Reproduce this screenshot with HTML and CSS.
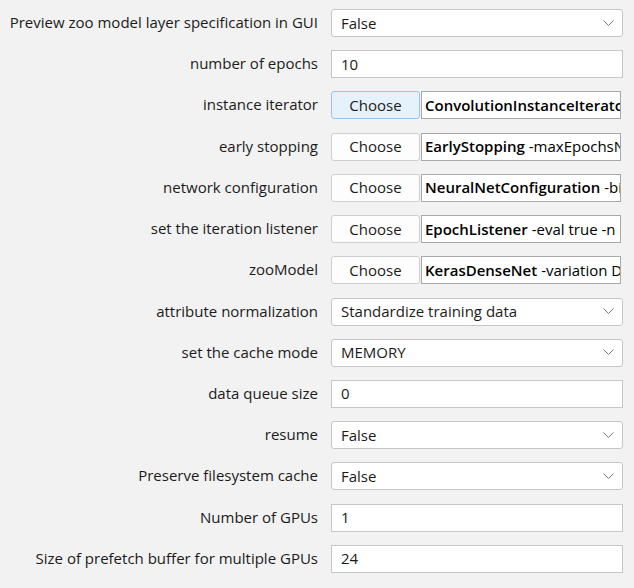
FILE: index.html
```html
<!DOCTYPE html>
<html>
<head>
<meta charset="utf-8">
<link rel="stylesheet" href="styles.css">
</head>
<body>
<div class="form">
  <div class="label">Preview zoo model layer specification in GUI</div>
  <div class="combo"><span>False</span><svg class="chev" width="11" height="6" viewBox="0 0 11 6"><path d="M0.5 0.5 L5.5 5.5 L10.5 0.5" /></svg></div>

  <div class="label">number of epochs</div>
  <div class="field">10</div>

  <div class="label">instance iterator</div>
  <div class="chooser"><div class="btn active">Choose</div><div class="value"><b>ConvolutionInstanceIterator</b> -textsFile train.csv -imagesLocation images</div></div>

  <div class="label">early stopping</div>
  <div class="chooser"><div class="btn">Choose</div><div class="value"><b>EarlyStopping</b> -maxEpochsNoImprovement 0 -valPercentage 0.0</div></div>

  <div class="label">network configuration</div>
  <div class="chooser"><div class="btn">Choose</div><div class="value"><b>NeuralNetConfiguration</b> -biasInit 0.0 -biasUpdater Sgd</div></div>

  <div class="label">set the iteration listener</div>
  <div class="chooser"><div class="btn">Choose</div><div class="value"><b>EpochListener</b> -eval true -n 5</div></div>

  <div class="label">zooModel</div>
  <div class="chooser"><div class="btn">Choose</div><div class="value"><b>KerasDenseNet</b> -variation DENSENET121</div></div>

  <div class="label">attribute normalization</div>
  <div class="combo"><span>Standardize training data</span><svg class="chev" width="11" height="6" viewBox="0 0 11 6"><path d="M0.5 0.5 L5.5 5.5 L10.5 0.5" /></svg></div>

  <div class="label">set the cache mode</div>
  <div class="combo"><span>MEMORY</span><svg class="chev" width="11" height="6" viewBox="0 0 11 6"><path d="M0.5 0.5 L5.5 5.5 L10.5 0.5" /></svg></div>

  <div class="label">data queue size</div>
  <div class="field">0</div>

  <div class="label">resume</div>
  <div class="combo"><span>False</span><svg class="chev" width="11" height="6" viewBox="0 0 11 6"><path d="M0.5 0.5 L5.5 5.5 L10.5 0.5" /></svg></div>

  <div class="label">Preserve filesystem cache</div>
  <div class="combo"><span>False</span><svg class="chev" width="11" height="6" viewBox="0 0 11 6"><path d="M0.5 0.5 L5.5 5.5 L10.5 0.5" /></svg></div>

  <div class="label">Number of GPUs</div>
  <div class="field">1</div>

  <div class="label">Size of prefetch buffer for multiple GPUs</div>
  <div class="field">24</div>
</div>
</body>
</html>
```
FILE: styles.css
```css
html, body {
  margin: 0;
  padding: 0;
  background: #f2f2f2;
}
body {
  font-family: "Open Sans", "Noto Sans", sans-serif;
  font-size: 15px;
  color: #1b1b1b;
  width: 634px;
  height: 588px;
  overflow: hidden;
}
.form {
  display: grid;
  grid-template-columns: 318px 292px;
  grid-auto-rows: 28px;
  column-gap: 13px;
  row-gap: 13.23px;
  padding-top: 9px;
}
.label {
  text-align: right;
  white-space: nowrap;
  line-height: 27px;
}
.combo, .field {
  box-sizing: border-box;
  height: 28px;
  background: #fff;
  border: 1px solid #c6c6c6;
  display: flex;
  align-items: center;
  padding-left: 9px;
  padding-bottom: 1px;
  white-space: nowrap;
}
.combo {
  border-radius: 3px;
  justify-content: space-between;
  padding-right: 8px;
}
.chev path {
  fill: none;
  stroke: #7a7a7a;
  stroke-width: 1;
}
.chooser {
  display: flex;
  height: 28px;
  gap: 1px;
}
.btn {
  box-sizing: border-box;
  width: 89px;
  height: 28px;
  flex: none;
  background: #fdfdfd;
  border: 1px solid #cfcfcf;
  border-radius: 3px;
  display: flex;
  align-items: center;
  justify-content: center;
  padding-bottom: 1px;
}
.btn.active {
  background: #e5f1fb;
  border-color: #9cc3ea;
}
.value {
  box-sizing: border-box;
  width: 200px;
  height: 28px;
  background: #fff;
  border: 1px solid #a9a9a9;
  padding-left: 3px;
  padding-bottom: 1px;
  white-space: nowrap;
  overflow: hidden;
  display: flex;
  align-items: center;
  color: #000;
}
.value b {
  font-weight: 600;
  margin-right: 4px;
}
```
